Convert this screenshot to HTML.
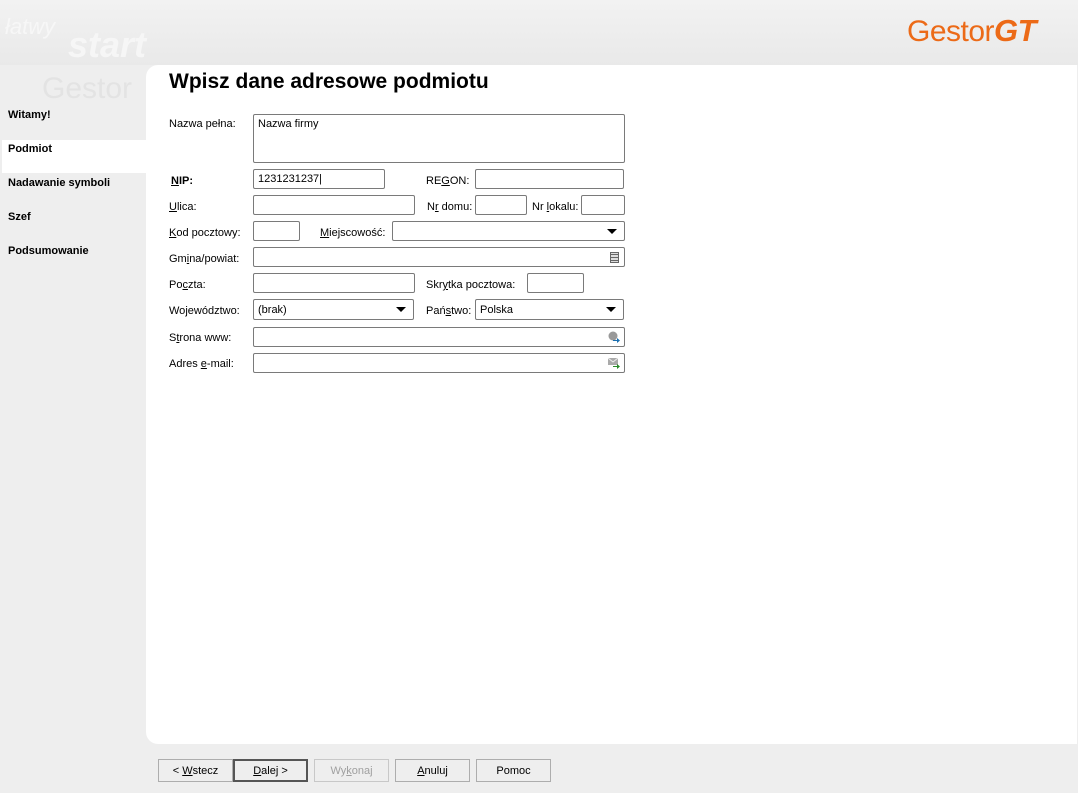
<!DOCTYPE html>
<html><head><meta charset="utf-8"><style>
*{margin:0;padding:0;box-sizing:border-box}
body{width:1078px;height:793px;background:#eeeeee;position:relative;overflow:hidden;font-family:"Liberation Sans",sans-serif;font-size:11px;color:#000}
.a{position:absolute}
.hdr{left:0;top:0;width:1078px;height:65px;background:linear-gradient(#f2f2f2,#e9e9e9)}
.panel{left:146px;top:65px;width:931px;height:679px;background:#fff;border-radius:12px 0 0 12px}
.nav{left:8px;font-weight:bold;font-size:11px}
.l{font-size:11px;white-space:nowrap;margin-top:2px}
.f{background:#fff;border:1px solid #7a7a7a;border-radius:2px;font-size:11px;padding:3px 4px 1px;line-height:13px}
.dd:after{content:"";position:absolute;right:7px;top:7px;border-left:5px solid transparent;border-right:5px solid transparent;border-top:5px solid #000}
.b{top:759px;height:23px;border:1px solid #adadad;background:#eeeeee;text-align:center;line-height:21px;font-size:11px}
u{text-decoration:underline}
</style></head><body>
<div class="a hdr"></div>
<div class="a" style="left:5px;top:14px;font-size:22px;color:#f7f7f7;font-style:italic">łatwy</div>
<div class="a" style="left:68px;top:24px;font-size:36px;color:#f6f6f6;font-weight:bold;font-style:italic">start</div>
<div class="a" style="left:42px;top:72px;font-size:30px;color:#e3e3e3">Gestor</div>
<div class="a" style="left:907px;top:13px;font-size:30px;color:#ec6a17;letter-spacing:-0.5px">Gestor<i style="font-weight:bold;font-size:31px">GT</i></div>
<div class="a panel"></div>
<div class="a" style="left:2px;top:140px;width:144px;height:33px;background:#fff"></div>
<div class="a nav" style="top:109px">Witamy!</div>
<div class="a nav" style="top:143px">Podmiot</div>
<div class="a nav" style="top:177px">Nadawanie symboli</div>
<div class="a nav" style="top:211px">Szef</div>
<div class="a nav" style="top:245px">Podsumowanie</div>
<div class="a" style="left:169px;top:70px;font-size:21px;font-weight:bold">Wpisz dane adresowe podmiotu</div>

<div class="a l" style="left:169px;top:116px">Nazwa pełna:</div>
<div class="a f" style="left:253px;top:114px;width:372px;height:49px">Nazwa firmy</div>

<div class="a l" style="left:171px;top:173px;font-weight:bold"><u>N</u>IP:</div>
<div class="a f" style="left:253px;top:169px;width:132px;height:20px">1231231237|</div>
<div class="a l" style="left:426px;top:173px">RE<u>G</u>ON:</div>
<div class="a f" style="left:475px;top:169px;width:149px;height:20px"></div>

<div class="a l" style="left:169px;top:199px"><u>U</u>lica:</div>
<div class="a f" style="left:253px;top:195px;width:162px;height:20px"></div>
<div class="a l" style="left:427px;top:199px">N<u>r</u> domu:</div>
<div class="a f" style="left:475px;top:195px;width:52px;height:20px"></div>
<div class="a l" style="left:532px;top:199px">Nr <u>l</u>okalu:</div>
<div class="a f" style="left:581px;top:195px;width:44px;height:20px"></div>

<div class="a l" style="left:169px;top:225px"><u>K</u>od pocztowy:</div>
<div class="a f" style="left:253px;top:221px;width:47px;height:20px"></div>
<div class="a l" style="left:320px;top:225px"><u>M</u>iejscowość:</div>
<div class="a f dd" style="left:392px;top:221px;width:233px;height:20px"></div>

<div class="a l" style="left:169px;top:251px">Gm<u>i</u>na/powiat:</div>
<div class="a f" style="left:253px;top:247px;width:372px;height:20px"><span class="a" style="right:5px;top:4px;width:9px;height:11px;border:1px solid #666;background:repeating-linear-gradient(#ddd 0 1px,#666 1px 2px,#ddd 2px 3px)"></span></div>

<div class="a l" style="left:169px;top:277px">Po<u>c</u>zta:</div>
<div class="a f" style="left:253px;top:273px;width:162px;height:20px"></div>
<div class="a l" style="left:426px;top:277px">Skr<u>y</u>tka pocztowa:</div>
<div class="a f" style="left:527px;top:273px;width:57px;height:20px"></div>

<div class="a l" style="left:169px;top:303px">Wo<u>j</u>ewództwo:</div>
<div class="a f dd" style="left:253px;top:299px;width:161px;height:21px;padding-top:4px">(brak)</div>
<div class="a l" style="left:426px;top:303px">Pań<u>s</u>two:</div>
<div class="a f dd" style="left:475px;top:299px;width:149px;height:21px;padding-top:4px">Polska</div>

<div class="a l" style="left:169px;top:330px">S<u>t</u>rona www:</div>
<div class="a f" style="left:253px;top:327px;width:372px;height:20px"><svg class="a" style="right:4px;top:3px" width="12" height="12"><circle cx="5" cy="5" r="4.5" fill="#999"/><path d="M5 9h4V7l3 2.5-3 2.5v-2H5z" fill="#1a6fb0"/></svg></div>

<div class="a l" style="left:169px;top:356px">Adres <u>e</u>-mail:</div>
<div class="a f" style="left:253px;top:353px;width:372px;height:20px"><svg class="a" style="right:4px;top:3px" width="12" height="12"><rect x="0" y="1" width="10" height="7" fill="#aaa"/><path d="M0 1l5 4 5-4" stroke="#eee" fill="none"/><path d="M5 9h4V7l3 2.5-3 2.5v-2H5z" fill="#2a8a2a"/></svg></div>

<div class="a b" style="left:158px;width:75px;line-height:22px">&lt; <u>W</u>stecz</div>
<div class="a b" style="left:233px;width:75px;border:2px solid #555;line-height:20px"><u>D</u>alej &gt;</div>
<div class="a b" style="left:314px;width:75px;color:#a0a0a0;border-color:#c8c8c8;line-height:22px">Wy<u>k</u>onaj</div>
<div class="a b" style="left:395px;width:75px;line-height:22px"><u>A</u>nuluj</div>
<div class="a b" style="left:476px;width:75px;line-height:22px">Pomoc</div>
</body></html>
